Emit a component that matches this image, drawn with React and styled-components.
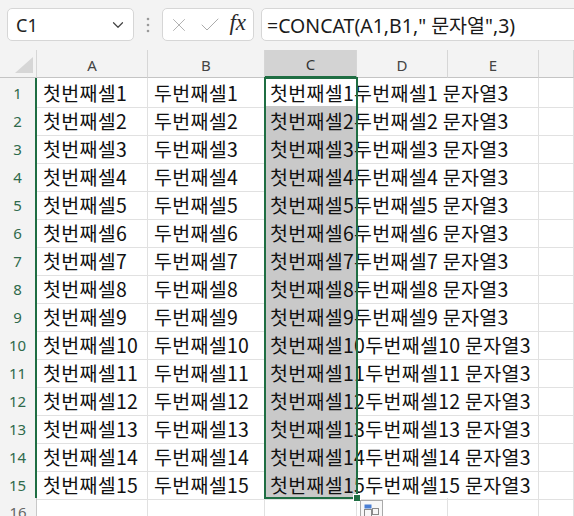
import React from 'react'
import styled, { createGlobalStyle } from 'styled-components'
import { ChevronDown, X, Check } from 'lucide-react'

const GREEN = '#1f6e43'
const GRID = '#e1e1e1'
const TEMPLATE = '37px 111px 117px 92px 91px 91px 1fr'

const columns = ['A', 'B', 'C', 'D', 'E', '']
const rows = Array.from({ length: 16 }, (_, i) => i + 1)

const GlobalStyle = createGlobalStyle`
  html, body {
    margin: 0;
    padding: 0;
    overflow: hidden;
    background: #f3f3f3;
  }
  * { box-sizing: border-box; }
`

const Page = styled.div`
  width: 574px;
  height: 516px;
  overflow: hidden;
  background: #f3f3f3;
`

const Toolbar = styled.div`
  height: 50px;
  display: flex;
  align-items: flex-start;
  padding: 8px 0 0 7px;
  font-family: 'Noto Sans', 'Noto Sans CJK KR', sans-serif;
`

const Field = styled.div`
  height: 33px;
  background: #fff;
  border: 1px solid #d6d6d6;
  border-radius: 5px;
  display: flex;
  align-items: center;
`

const NameBox = styled(Field)`
  width: 127px;
  padding: 0 6px 0 8px;
  justify-content: space-between;
  font-size: 18px;
  color: #222;
`

const Grip = styled.div`
  width: 28px;
  height: 33px;
  display: flex;
  align-items: center;
  justify-content: center;
`

const ButtonBox = styled(Field)`
  width: 92px;
  padding: 0 5px 0 5px;
  justify-content: space-between;
`

const Fx = styled.span`
  font-family: 'Liberation Serif', serif;
  font-style: italic;
  font-size: 23px;
  color: #2a2a2a;
  padding-right: 2px;
  margin-top: -3px;
`

const FormulaBox = styled(Field)`
  flex: 1;
  margin-left: 7px;
  margin-right: -10px;
  padding-left: 5px;
  font-size: 19.5px;
  color: #1a1a1a;
  white-space: nowrap;
`

const Sheet = styled.div`
  position: relative;
  background: #fff;
`

const HeaderRow = styled.div`
  display: grid;
  grid-template-columns: ${TEMPLATE};
  height: 28px;
  background: #f3f3f3;
  font-family: 'Noto Sans', sans-serif;
`

const Corner = styled.div`
  display: flex;
  align-items: flex-end;
  justify-content: flex-end;
  padding: 0 3px 4px 0;
  border-right: 1px solid #d6d6d6;
  border-bottom: 1px solid #c4c4c4;
`

const ColHead = styled.div`
  display: flex;
  align-items: center;
  justify-content: center;
  padding-top: 2px;
  font-size: 15px;
  color: ${p => (p.$active ? '#333' : '#444')};
  background: ${p => (p.$active ? '#d3d3d3' : 'transparent')};
  border-right: 1px solid #d6d6d6;
  border-bottom: ${p => (p.$active ? `2px solid ${GREEN}` : '1px solid #c4c4c4')};
`

const Row = styled.div`
  display: grid;
  grid-template-columns: ${TEMPLATE};
  height: 28px;
  background: #fff;
`

const RowHead = styled.div`
  display: flex;
  align-items: center;
  justify-content: center;
  background: #f3f3f3;
  font-family: 'Noto Sans', sans-serif;
  font-size: 15px;
  color: ${p => (p.$selected ? '#2f6a4b' : '#666')};
  border-bottom: 1px solid #dadada;
  border-right: ${p => (p.$selected ? `2px solid ${GREEN}` : '1px solid #c8c8c8')};
`

const Cell = styled.div`
  display: flex;
  align-items: center;
  padding-left: ${p => (p.$pad ? p.$pad : 5)}px;
  white-space: nowrap;
  overflow: visible;
  font-family: 'Noto Sans CJK KR', 'Noto Sans', sans-serif;
  font-size: 19.5px;
  letter-spacing: 0.3px;
  color: #111;
  background: ${p => (p.$shade ? '#c9c9c9' : 'transparent')};
  border-bottom: 1px solid ${GRID};
  border-right: ${p => (p.$open ? 'none' : `1px solid ${GRID}`)};
`

const Selection = styled.div`
  position: absolute;
  left: 264px;
  top: 27px;
  width: 94px;
  height: 422px;
  border: 2px solid ${GREEN};
  pointer-events: none;
`

const FillHandle = styled.div`
  position: absolute;
  right: -5px;
  bottom: -5px;
  width: 8px;
  height: 8px;
  background: ${GREEN};
  border: 1px solid #fff;
`

const PasteIcon = styled.div`
  position: absolute;
  left: 360px;
  top: 450px;
  width: 23px;
  height: 23px;
  background: #f7f7f7;
  border: 1px solid #a9a9a9;
  display: flex;
  align-items: center;
  justify-content: center;
`

const Dots = () => (
  <svg width="4" height="16" viewBox="0 0 4 16">
    <circle cx="2" cy="2" r="1.3" fill="#9a9a9a" />
    <circle cx="2" cy="8" r="1.3" fill="#9a9a9a" />
    <circle cx="2" cy="14" r="1.3" fill="#9a9a9a" />
  </svg>
)

const Triangle = () => (
  <svg width="18" height="16" viewBox="0 0 18 16">
    <polygon points="18,0 18,16 0,16" fill="#d6d6d6" />
  </svg>
)

const QuickIcon = () => (
  <svg width="17" height="17" viewBox="0 0 17 17">
    <rect x="1.5" y="1.5" width="7" height="4" fill="#4a7fd4" />
    <rect x="1.5" y="6.5" width="7" height="9" fill="none" stroke="#8a8a8a" />
    <rect x="9.5" y="5.5" width="6" height="6" fill="none" stroke="#8a8a8a" />
  </svg>
)

const cText = n => `첫번째셀${n}두번째셀${n} 문자열3`

const App = () => (
  <Page>
    <GlobalStyle />
    <Toolbar>
      <NameBox>
        <span>C1</span>
        <ChevronDown size={18} strokeWidth={1.6} color="#444" />
      </NameBox>
      <Grip>
        <Dots />
      </Grip>
      <ButtonBox>
        <X size={22} strokeWidth={1} color="#ababab" />
        <Check size={24} strokeWidth={1} color="#ababab" />
        <Fx>fx</Fx>
      </ButtonBox>
      <FormulaBox>=CONCAT(A1,B1," 문자열",3)</FormulaBox>
    </Toolbar>

    <Sheet>
      <HeaderRow>
        <Corner>
          <Triangle />
        </Corner>
        {columns.map((c, i) => (
          <ColHead key={i} $active={c === 'C'}>
            {c}
          </ColHead>
        ))}
      </HeaderRow>

      {rows.map(n => {
        const filled = n <= 15
        return (
          <Row key={n}>
            <RowHead $selected={filled}>{n}</RowHead>
            <Cell $pad={6}>{filled ? `첫번째셀${n}` : ''}</Cell>
            <Cell $pad={6}>{filled ? `두번째셀${n}` : ''}</Cell>
            <Cell $shade={filled && n > 1}>{filled ? cText(n) : ''}</Cell>
            <Cell $open={filled} />
            <Cell />
            <Cell />
          </Row>
        )
      })}

      <Selection>
        <FillHandle />
      </Selection>
      <PasteIcon>
        <QuickIcon />
      </PasteIcon>
    </Sheet>
  </Page>
)

export default App
